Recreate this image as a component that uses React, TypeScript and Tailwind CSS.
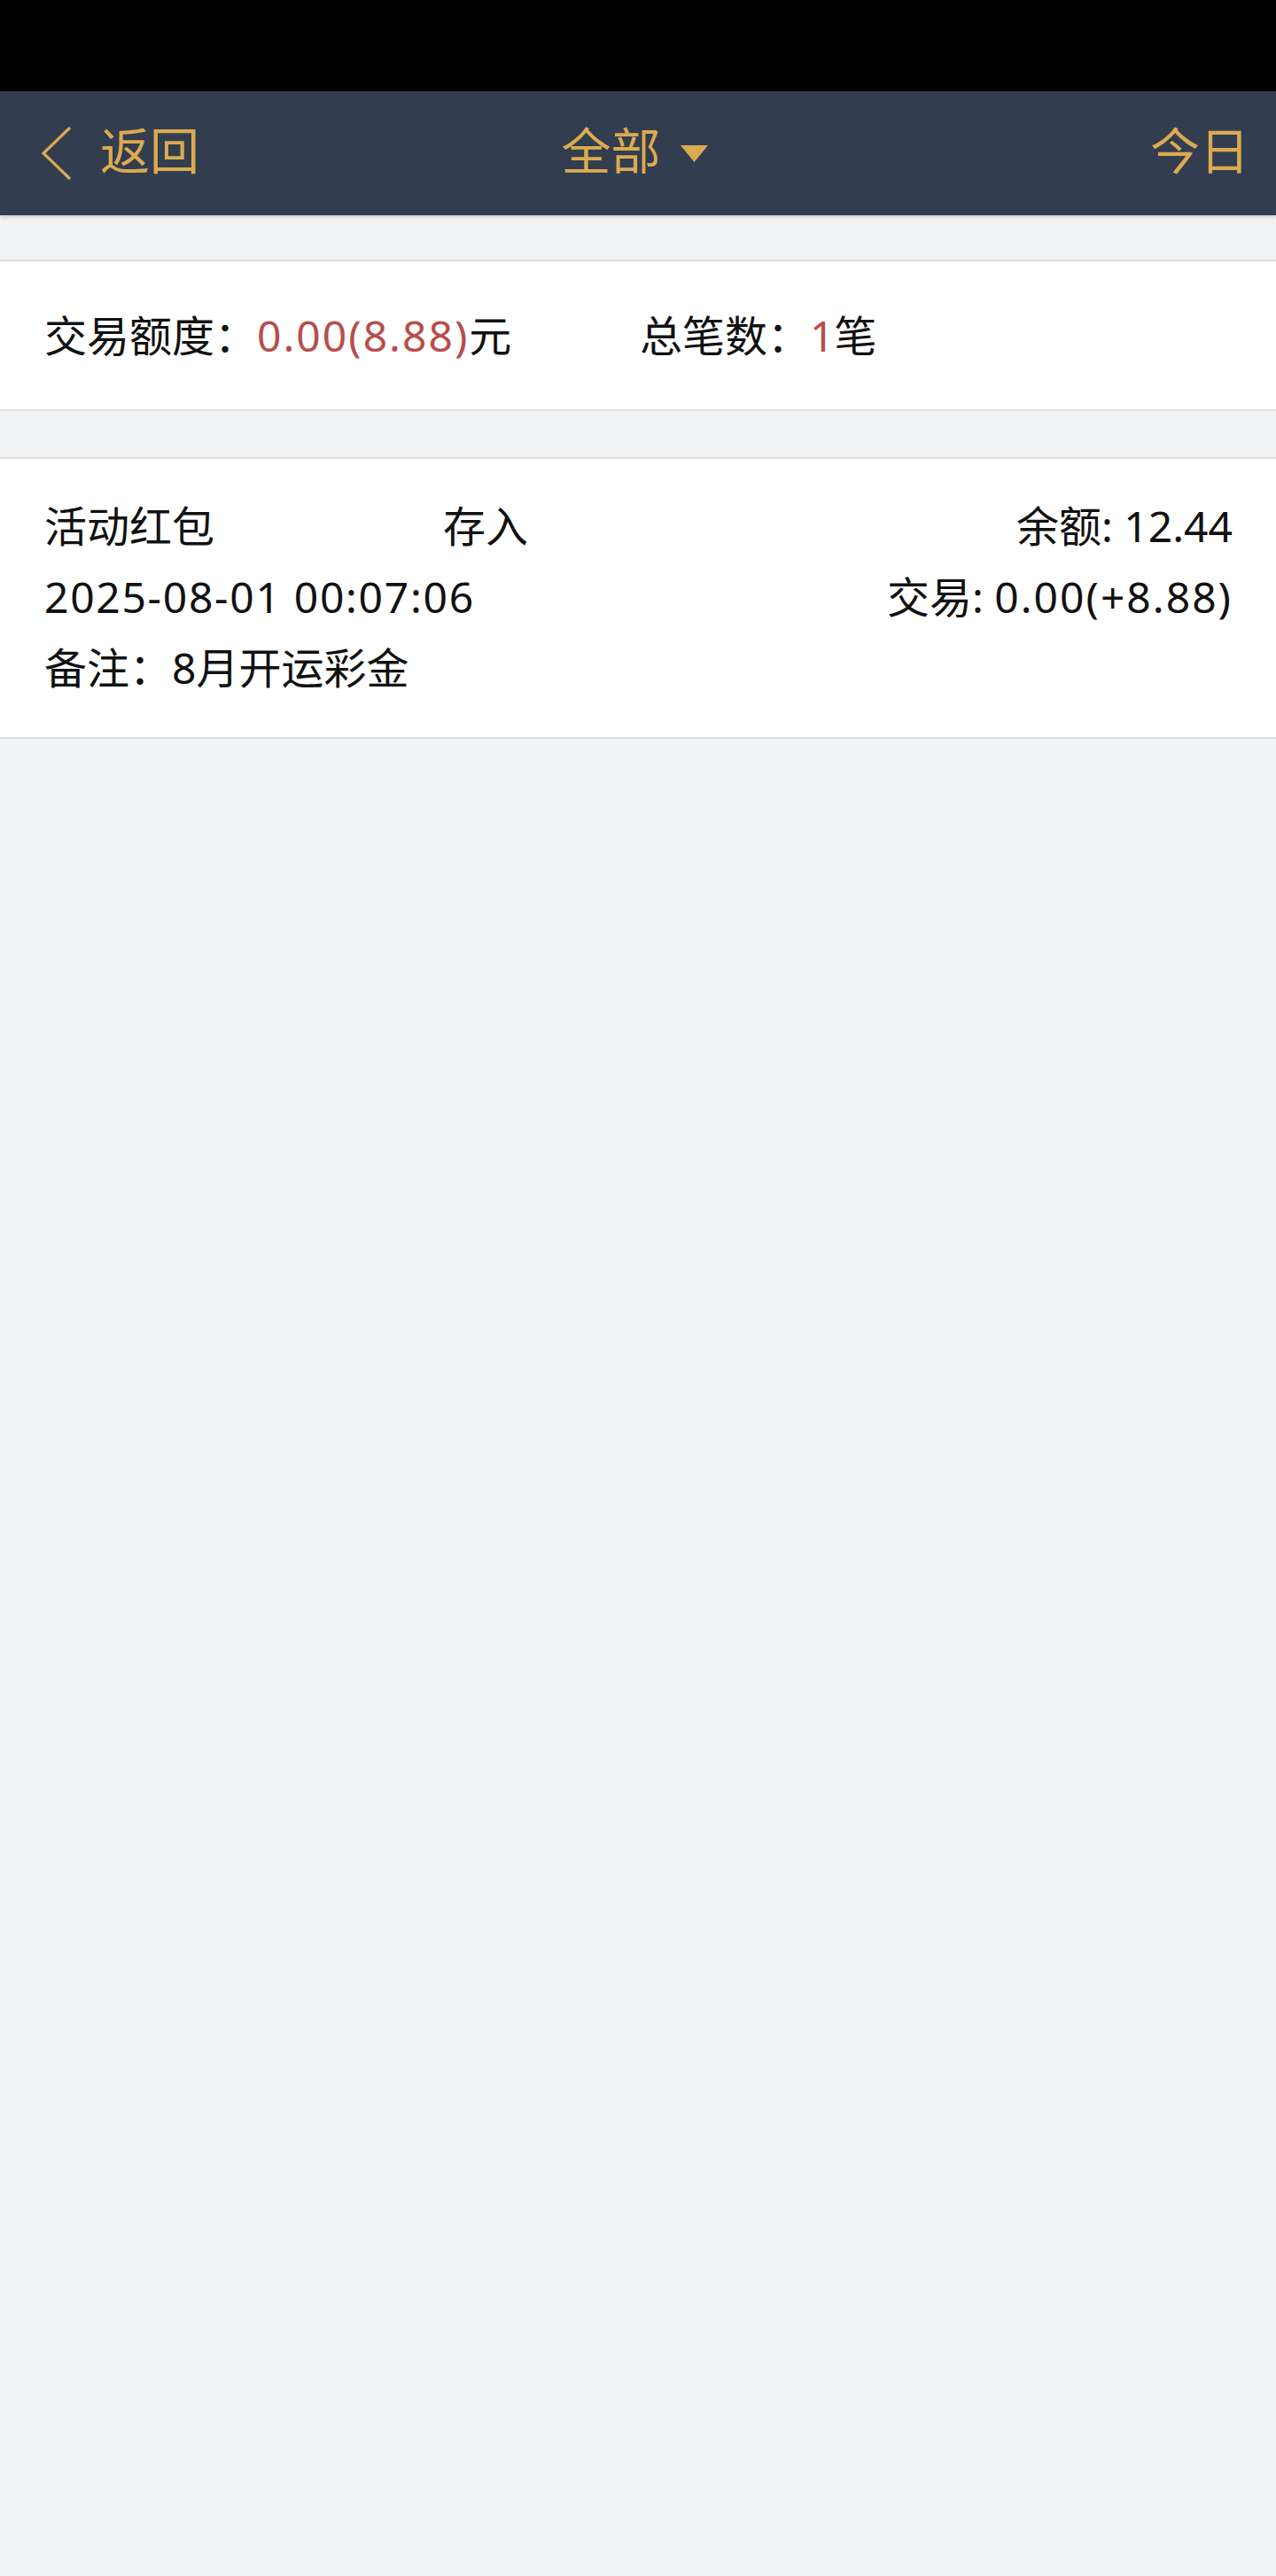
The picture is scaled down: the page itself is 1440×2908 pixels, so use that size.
import React from "react";

const font = { fontFamily: '"Noto Sans", "Noto Sans CJK SC", sans-serif' };

export default function App() {
  return (
    <div
      className="min-h-screen w-full bg-[#f2f3f5] text-[#111111]"
      style={font}
    >
      <div className="h-[103px] bg-black" />
      <header className="relative z-10 flex h-[140px] items-center bg-[#323e50] pb-[8px] pr-[30px] text-[56px] leading-none text-[#dcaa50] shadow-[0_2px_4px_rgba(0,0,0,0.18)]">
        <div className="flex w-[500px] items-center pl-[47px]">
          <svg width="34" height="60" viewBox="0 0 34 60" className="mr-[32px] mt-[8px]">
            <polyline
              points="32,1 2,30 32,59"
              fill="none"
              stroke="#dcaa50"
              strokeWidth="3.2"
            />
          </svg>
          <span>返回</span>
        </div>
        <div className="flex flex-1 items-center justify-center pl-[22px]">
          <span>全部</span>
          <svg width="31" height="20" viewBox="0 0 31 20" className="ml-[22px] mt-[8px]">
            <polygon points="0,1 31,1 15.5,20" fill="#dcaa50" />
          </svg>
        </div>
        <div className="flex w-[500px] justify-end">
          <span>今日</span>
        </div>
      </header>

      <div className="h-[50px]" />

      <section className="flex h-[171px] items-center border-y-2 border-[#dedfe1] bg-white text-[48px] leading-none">
        <div className="w-1/2 pl-[50px]">
          交易额度：<span className="tracking-[2px] text-[#b84d4a]">0.00(8.88)</span>元
        </div>
        <div className="w-1/2 pl-[2px]">
          总笔数：<span className="text-[#b84d4a]">1</span>笔
        </div>
      </section>

      <div className="h-[52px]" />

      <section className="border-y-2 border-[#dedfe1] bg-white pb-[38px] pl-[50px] pr-[49px] pt-[36px] text-[48px] leading-[80px]">
        <div className="flex items-center">
          <span className="w-[450px]">活动红包</span>
          <span>存入</span>
          <span className="ml-auto">余额: 12.44</span>
        </div>
        <div className="flex items-center">
          <span className="tracking-[1.7px]">2025-08-01 00:07:06</span>
          <span className="ml-auto">
            交易: <span className="tracking-[2px]">0.00(+8.88)</span>
          </span>
        </div>
        <div className="flex items-center">
          <span>备注：8月开运彩金</span>
        </div>
      </section>
    </div>
  );
}
